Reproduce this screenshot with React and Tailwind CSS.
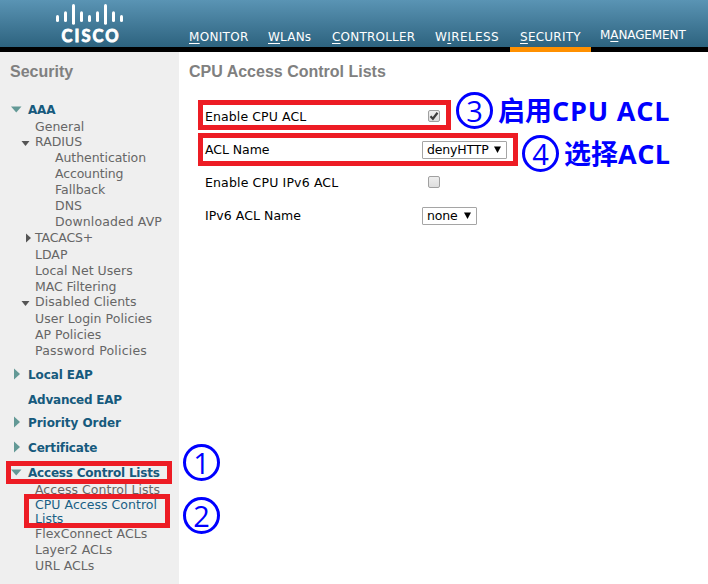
const nav = [
  { pre: "", key: "M", post: "ONITOR", box: "w-[79px]", text: "tracking-[0.3px]" },
  { pre: "", key: "W", post: "LANs", box: "w-[64px]", text: "tracking-[0.2px]" },
  { pre: "", key: "C", post: "ONTROLLER", box: "w-[103px]", text: "tracking-[0.2px]" },
  { pre: "W", key: "I", post: "RELESS", box: "w-[75px]", text: "tracking-[0.4px]" },
  { pre: "", key: "S", post: "ECURITY", box: "w-[81px] pl-[10px]", text: "tracking-[0.25px]", active: true },
  { pre: "M", key: "A", post: "NAGEMENT", box: "w-[108px] pl-[9px] pb-[2px]", text: "tracking-[-0.1px]" },
];

const menu = [
  { t: "AAA", k: "top", a: "down", h: "h-[26px]", tr: "tracking-[-0.2px]" },
  { t: "General", k: "sub", h: "h-[17px]", tr: "tracking-normal" },
  { t: "RADIUS", k: "sub", a: "down", h: "h-[15px]", tr: "tracking-normal" },
  { t: "Authentication", k: "deep", h: "h-4", tr: "tracking-[-0.05px]" },
  { t: "Accounting", k: "deep", h: "h-4", tr: "tracking-[-0.15px]" },
  { t: "Fallback", k: "deep", h: "h-4", tr: "tracking-normal" },
  { t: "DNS", k: "deep", h: "h-4", tr: "tracking-normal" },
  { t: "Downloaded AVP", k: "deep", h: "h-4", tr: "tracking-[0.1px]" },
  { t: "TACACS+", k: "sub", a: "right", h: "h-4", tr: "tracking-[-0.15px]" },
  { t: "LDAP", k: "sub", h: "h-[17px]", tr: "tracking-normal" },
  { t: "Local Net Users", k: "sub", h: "h-4", tr: "tracking-[0.03px]" },
  { t: "MAC Filtering", k: "sub", h: "h-4", tr: "tracking-[-0.05px]" },
  { t: "Disabled Clients", k: "sub", a: "down", h: "h-[15px]", tr: "tracking-[0.04px]" },
  { t: "User Login Policies", k: "sub", h: "h-[17px]", tr: "tracking-[0.04px]" },
  { t: "AP Policies", k: "sub", h: "h-4", tr: "tracking-normal" },
  { t: "Password Policies", k: "sub", h: "h-4", tr: "tracking-[0.2px]" },
  { t: "Local EAP", k: "top", a: "right", h: "h-6", tr: "tracking-[-0.1px]" },
  { t: "Advanced EAP", k: "top", h: "h-[25px]", tr: "tracking-[-0.23px]" },
  { t: "Priority Order", k: "top", a: "right", h: "h-[23px]", tr: "tracking-[-0.05px]" },
  { t: "Certificate", k: "top", a: "right", h: "h-[25px]", tr: "tracking-[-0.17px]" },
  { t: "Access Control Lists", k: "top", a: "down", h: "h-[25px]", tr: "tracking-[-0.2px]" },
  { t: "Access Control Lists", k: "sub", h: "h-[17px]", tr: "tracking-[0.04px]" },
  { t: "CPU Access Control", k: "current", h: "h-[15px]", tr: "tracking-[0.04px]" },
  { t: "Lists", k: "current", h: "h-[14px]", tr: "tracking-normal" },
  { t: "FlexConnect ACLs", k: "sub", h: "h-[15px]", tr: "tracking-[0.03px]" },
  { t: "Layer2 ACLs", k: "sub", h: "h-4", tr: "tracking-normal" },
  { t: "URL ACLs", k: "sub", h: "h-4", tr: "tracking-normal" },
];

const indent = {
  top: "w-[28px] pl-[11px] text-[#639996]",
  sub: "w-[35px] pl-[21px] text-[#555555]",
  deep: "w-[55px]",
  current: "w-[35px]",
};

const tone = {
  top: "font-bold text-xs text-[#165a7d]",
  sub: "text-[12.5px] text-[#666666]",
  deep: "text-[12.5px] text-[#666666]",
  current: "text-[12.5px] text-[#1a5f85]",
};

function Arrow({ dir, small }) {
  if (dir === "down") {
    return small ? (
      <svg width="9" height="16" className="block"><path d="M0.5 7h8L4.5 12z" fill="currentColor" /></svg>
    ) : (
      <svg width="11" height="16" className="block"><path d="M0 4.500h10.500L5.250 10.500z" fill="currentColor" /></svg>
    );
  }
  return small ? (
    <svg width="11" height="16" className="block"><path d="M5 3.500v9L10 8z" fill="currentColor" /></svg>
  ) : (
    <svg width="11" height="16" className="block"><path d="M3 1.500v11L9 7z" fill="currentColor" /></svg>
  );
}

function MenuRow({ item }) {
  return (
    <div className={`flex items-end ${item.h}`}>
      <div className={`shrink-0 ${indent[item.k]}`}>
        {item.a && <Arrow dir={item.a} small={item.k === "sub"} />}
      </div>
      <span className={`whitespace-nowrap leading-4 ${tone[item.k]} ${item.tr}`}>{item.t}</span>
    </div>
  );
}

function Logo() {
  const bars = [
    [57.5, 16.5, 20.5], [65.5, 12.8, 20.5], [73.5, 5.5, 23.3], [81.5, 12.8, 20.5], [89.5, 16.5, 20.5],
    [97.5, 12.8, 20.5], [105.5, 5.5, 23.3], [113.5, 12.8, 20.5], [121.5, 16.5, 20.5],
  ];
  return (
    <svg width="189" height="47" className="block shrink-0">
      <g stroke="white" strokeWidth="3" strokeLinecap="round">
        {bars.map(([x, a, b]) => <line key={x} x1={x} x2={x} y1={a} y2={b} />)}
      </g>
      <text x="61.5" y="42" fill="white" stroke="white" strokeWidth="0.9" fontSize="16.5" fontWeight="bold" fontFamily="Lato, sans-serif" textLength="57">CISCO</text>
    </svg>
  );
}

function Checkbox({ checked }) {
  return (
    <div className="ml-[6px] mb-px h-3 w-3 rounded-[2px] border border-[#a0a0a0] bg-linear-to-b from-[#eeeeee] to-[#dedede]">
      {checked && (
        <svg viewBox="0 0 10 10" className="block h-[10px] w-[10px]">
          <path d="M1.500 5.200L3.900 7.700L8.500 1.800" fill="none" stroke="#3c3c3c" strokeWidth="2.200" />
        </svg>
      )}
    </div>
  );
}

function Select({ value, width }) {
  return (
    <div className={`flex h-[18px] items-center justify-between rounded-[1px] border border-[#a5a5a5] bg-white pl-1 pr-[5px] text-[12.5px] ${width}`}>
      <span className="pt-px tracking-[-0.15px]">{value}</span>
      <svg width="7" height="8"><path d="M0 0.500h7L3.500 7z" fill="black" /></svg>
    </div>
  );
}

function Field({ label, tracking, children }) {
  return (
    <div className="flex h-[33px] items-center">
      <span className={`w-[217px] pt-[2px] text-[12.5px] ${tracking}`}>{label}</span>
      {children}
    </div>
  );
}

function Step({ n, pos }) {
  return (
    <div className={`absolute flex h-[37px] w-[37px] items-center justify-center rounded-full border-[3px] border-[#0000ff] font-['Open_Sans',sans-serif] text-[29px] leading-none text-[#0000ff] ${pos}`}>
      {n}
    </div>
  );
}

const note = "absolute whitespace-nowrap font-['Open_Sans','Noto_Sans_CJK_SC',sans-serif] text-[27px] font-bold leading-9 text-[#0000ff]";
const frame = "absolute border-[5px] border-[#ed1c24]";

export default function App() {
  return (
    <div className="relative flex h-[584px] w-[708px] flex-col overflow-hidden bg-white font-['DejaVu_Sans',sans-serif] text-black">
      <header className="flex h-[52px] border-b-[5px] border-black bg-linear-to-b from-[#5a94b4] to-[#2d637f]">
        <Logo />
        <nav className="flex h-[52px] text-xs text-white">
          {nav.map((n) => (
            <a key={n.post} className={`flex shrink-0 items-end ${n.box} ${n.active ? "border-b-[5px] border-[#ff9000]" : "mb-[5px]"}`}>
              <span className={`mb-[2px] whitespace-nowrap leading-4 ${n.text}`}>
                {n.pre}<span className="underline underline-offset-2">{n.key}</span>{n.post}
              </span>
            </a>
          ))}
        </nav>
      </header>
      <div className="flex flex-1">
        <aside className="w-[179px] shrink-0 bg-[#efefef]">
          <h2 className="h-[40px] pl-[10px] pt-[10px] font-['Liberation_Sans',sans-serif] text-base font-bold leading-5 text-[#808080]">Security</h2>
          {menu.map((item, i) => <MenuRow key={i} item={item} />)}
        </aside>
        <main className="flex-1">
          <h1 className="h-[48px] pl-[10px] pt-[10px] font-['Liberation_Sans',sans-serif] text-base font-bold leading-5 text-[#808080]">CPU Access Control Lists</h1>
          <div className="pl-[26px]">
            <Field label="Enable CPU ACL" tracking="tracking-[0.1px]"><Checkbox checked /></Field>
            <Field label="ACL Name" tracking="tracking-[-0.05px]"><Select value="denyHTTP" width="w-[85px]" /></Field>
            <Field label="Enable CPU IPv6 ACL" tracking="tracking-[0.15px]"><Checkbox /></Field>
            <Field label="IPv6 ACL Name" tracking="tracking-[0.05px]"><Select value="none" width="w-[55px]" /></Field>
          </div>
        </main>
      </div>

      <div className={`${frame} left-[6px] top-[461px] h-[23px] w-[166px]`} />
      <div className={`${frame} left-[24px] top-[494px] h-[34px] w-[146px]`} />
      <div className={`${frame} left-[198px] top-[100px] h-[30px] w-[253px]`} />
      <div className={`${frame} left-[198px] top-[133px] h-[33px] w-[320px]`} />
      <Step n="1" pos="left-[183px] top-[444px]" />
      <Step n="2" pos="left-[183px] top-[497px]" />
      <Step n="3" pos="left-[456px] top-[92px]" />
      <Step n="4" pos="left-[522px] top-[135px]" />
      <div className={`${note} left-[498px] top-[93px]`}>启用<span className="tracking-[0.8px]">CPU ACL</span></div>
      <div className={`${note} left-[564px] top-[136px]`}>选择<span className="tracking-[0.5px]">ACL</span></div>
    </div>
  );
}
